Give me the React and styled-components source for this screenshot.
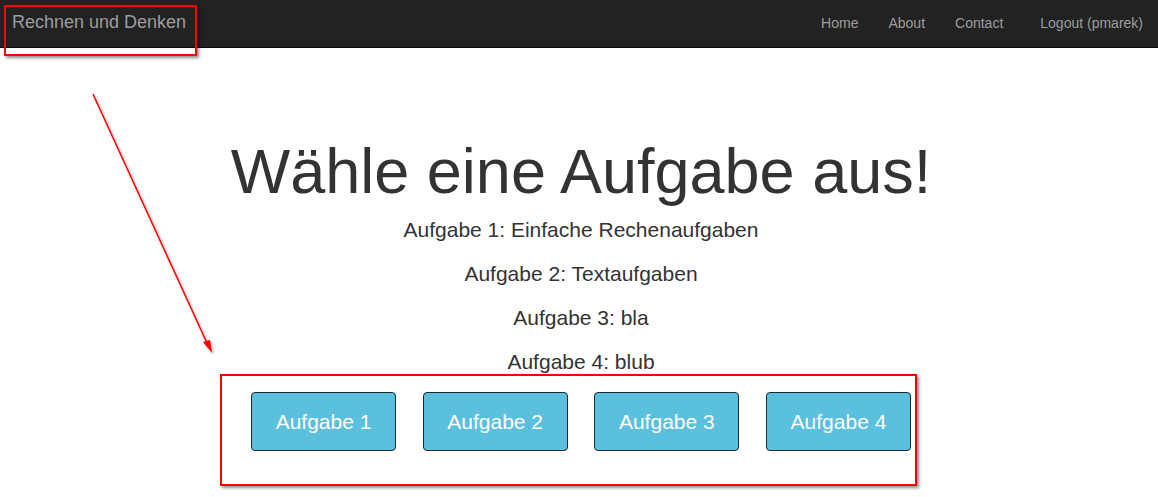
import React from "react";
import styled, { createGlobalStyle } from "styled-components";

const Global = createGlobalStyle`
  html, body { margin: 0; padding: 0; background: #fff; }
  body { font-family: "Liberation Sans", Arial, sans-serif; color: #333; }
  * { box-sizing: border-box; }
`;

const Page = styled.div`
  position: relative;
  width: 1158px;
  height: 497px;
  overflow: hidden;
`;

const Navbar = styled.nav`
  display: flex;
  align-items: stretch;
  height: 48px;
  background: #222;
  border-bottom: 1px solid #080808;
`;

const Brand = styled.a`
  display: flex;
  align-items: center;
  padding: 0 12px;
  font-size: 18px;
  color: #9d9d9d;
  text-decoration: none;
  padding-bottom: 2px;
`;

const NavList = styled.ul`
  display: flex;
  list-style: none;
  margin: 0;
  margin-left: ${(p) => p.$offset || "0px"};
  padding: 0;
`;

const Spacer = styled.div`
  flex: 1;
`;

const NavLink = styled.a`
  display: flex;
  align-items: center;
  height: 100%;
  padding: 0 15px 2px;
  font-size: 14px;
  color: #9d9d9d;
  text-decoration: none;
`;

const Main = styled.main`
  display: flex;
  flex-direction: column;
  align-items: center;
  padding: 89px 0 0 4px;
  text-align: center;
`;

const Title = styled.h1`
  margin: 0 0 9px;
  font-size: 63px;
  line-height: 1.1;
  font-weight: 400;
  color: #333;
`;

const Lead = styled.p`
  margin: 0 0 15px;
  font-size: 21px;
  line-height: 29px;
  color: #333;
`;

const ButtonRow = styled.div`
  display: flex;
  gap: 26.67px;
  margin-top: 1px;
`;

const TaskButton = styled.button`
  width: 145px;
  height: 59px;
  background: #5bc0de;
  border: 1px solid #1d2a30;
  border-radius: 4px;
  color: #fff;
  font-family: "Liberation Sans", Arial, sans-serif;
  font-size: 21px;
  cursor: pointer;
`;

const Highlight = styled.div`
  position: absolute;
  left: ${(p) => p.$x}px;
  top: ${(p) => p.$y}px;
  width: ${(p) => p.$w}px;
  height: ${(p) => p.$h}px;
  border: 2px solid #f00;
  box-shadow: 2px 2px 3px rgba(0, 0, 0, 0.45);
  pointer-events: none;
`;

const ArrowSvg = styled.svg`
  position: absolute;
  left: 0;
  top: 0;
  pointer-events: none;
`;

const tasks = [
  "Aufgabe 1: Einfache Rechenaufgaben",
  "Aufgabe 2: Textaufgaben",
  "Aufgabe 3: bla",
  "Aufgabe 4: blub",
];

export default function App() {
  return (
    <>
      <Global />
      <Page>
        <Navbar>
          <Brand href="#">Rechnen und Denken</Brand>
          <Spacer />
          <NavList>
            <li><NavLink href="#">Home</NavLink></li>
            <li><NavLink href="#">About</NavLink></li>
            <li><NavLink href="#">Contact</NavLink></li>
          </NavList>
          <NavList $offset="7px">
            <li><NavLink href="#">Logout (pmarek)</NavLink></li>
          </NavList>
        </Navbar>
        <Main>
          <Title>Wähle eine Aufgabe aus!</Title>
          {tasks.map((t) => (
            <Lead key={t}>{t}</Lead>
          ))}
          <ButtonRow>
            {[1, 2, 3, 4].map((n) => (
              <TaskButton key={n}>Aufgabe {n}</TaskButton>
            ))}
          </ButtonRow>
        </Main>

        <Highlight $x={4} $y={5} $w={193} $h={51} />
        <Highlight $x={220} $y={374} $w={697} $h={112} />
        <ArrowSvg width="1158" height="497" viewBox="0 0 1158 497">
          <defs>
            <filter id="sh" x="-20%" y="-20%" width="140%" height="140%">
              <feDropShadow dx="1.5" dy="1.5" stdDeviation="1" floodColor="#000" floodOpacity="0.35" />
            </filter>
          </defs>
          <g filter="url(#sh)">
            <line x1="93" y1="94" x2="207" y2="343" stroke="#f00" strokeWidth="1.5" />
            <polygon points="212,353 203,342 210,340" fill="#f00" />
          </g>
        </ArrowSvg>
      </Page>
    </>
  );
}
